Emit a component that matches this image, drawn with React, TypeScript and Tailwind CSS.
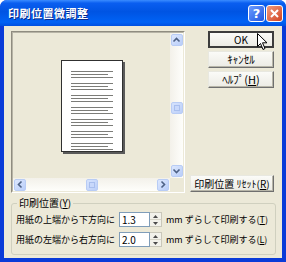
import React from "react";

const font = { fontFamily: '"Noto Sans CJK JP", "Noto Sans", sans-serif' };

function Arrow({ dir }: { dir: "up" | "down" | "left" | "right" }) {
  const d =
    dir === "up"
      ? "M1.5 5.5 L4.5 2.5 L7.5 5.5"
      : dir === "down"
      ? "M1.5 2.5 L4.5 5.5 L7.5 2.5"
      : dir === "left"
      ? "M5.5 1.5 L2.5 4.5 L5.5 7.5"
      : "M2.5 1.5 L5.5 4.5 L2.5 7.5";
  return (
    <svg width="9" height="9" viewBox="0 0 9 9">
      <path d={d} fill="none" stroke="#4d6185" strokeWidth="1.6" />
    </svg>
  );
}

function SBtn({ dir }: { dir: "up" | "down" | "left" | "right" }) {
  return (
    <div className="w-[12px] h-[12px] shrink-0 rounded-[2px] border border-[#b8ccf5] bg-gradient-to-br from-[#dde8fe] to-[#b9cdf8] flex items-center justify-center">
      <Arrow dir={dir} />
    </div>
  );
}

function Thumb() {
  return (
    <div className="w-[12px] h-[12px] shrink-0 rounded-[2px] border border-[#b8ccf5] bg-gradient-to-br from-[#d6e3fd] to-[#bccff8] flex items-center justify-center">
      <div className="w-[6px] h-[6px] border border-[#a9bfee] bg-[#c8d8fb]" />
    </div>
  );
}

function Page() {
  const groups = [0, 1, 2, 3, 4, 5, 6];
  return (
    <div className="relative w-[62px] h-[92px]">
      <div className="absolute left-[2px] top-[2px] w-[62px] h-[92px] bg-[#5a5a5a]" />
      <div className="relative w-[62px] h-[92px] bg-white border border-[#303030] pt-[10px] pl-[9px] flex flex-col gap-[5px]">
        {groups.map((g) => (
          <div key={g} className="flex flex-col gap-[2px]">
            <div className="h-px w-[42px] bg-[#7c7c78]" />
            <div className="h-px w-[37px] bg-[#7c7c78]" />
            <div className="h-px w-[42px] bg-[#7c7c78]" />
          </div>
        ))}
      </div>
    </div>
  );
}

function Btn({
  children,
  w,
  def,
  size = "text-[10px]",
}: {
  children: React.ReactNode;
  w: string;
  def?: boolean;
  size?: string;
}) {
  return (
    <div
      className={`${w} ${size} h-[17px] flex items-center justify-center whitespace-nowrap leading-none text-black bg-gradient-to-b from-[#fbfbf8] to-[#ecebe4] ${
        def
          ? "border-2 border-[#3c3c3c]"
          : "border border-t-[#e8e8e0] border-l-[#e8e8e0] border-b-[#6f6f6f] border-r-[#6f6f6f] shadow-[inset_-1px_-1px_0_#b7b5a8]"
      }`}
    >
      {children}
    </div>
  );
}

function Spin({ value }: { value: string }) {
  return (
    <div className="flex h-[15px] shrink-0">
      <div className="w-[31px] h-[15px] bg-white border border-[#7f9db9] flex items-center pl-[2px] text-[10px] leading-none text-black">
        {value}
      </div>
      <div className="w-[12px] h-[15px] flex flex-col bg-[#f2f1ea] border border-l-0 border-[#c9c7ba]">
        <div className="flex-1 flex items-center justify-center border-b border-[#d6d4c8]">
          <svg width="5" height="3" viewBox="0 0 5 3">
            <path d="M0 3 L2.5 0 L5 3 Z" fill="#4a4a4a" />
          </svg>
        </div>
        <div className="flex-1 flex items-center justify-center">
          <svg width="5" height="3" viewBox="0 0 5 3">
            <path d="M0 0 L2.5 3 L5 0 Z" fill="#4a4a4a" />
          </svg>
        </div>
      </div>
    </div>
  );
}

export default function App() {
  return (
    <div
      style={font}
      className="w-[286px] h-[262px] flex flex-col bg-[#0a3bd8] rounded-t-[7px] overflow-hidden relative"
    >
      {/* title bar */}
      <div className="h-[26px] shrink-0 flex items-center pl-[8px] pr-[3px] bg-[linear-gradient(to_bottom,#3a8cff_0%,#0a5ef0_12%,#0054e3_45%,#0062f5_85%,#0050e0_100%)]">
        <div className="flex-1 text-white font-bold text-[11px] leading-none tracking-[0.5px] [text-shadow:1px_1px_0_#0a2a8a]">
          印刷位置微調整
        </div>
        <div className="flex gap-[1px]">
          <div className="w-[17px] h-[17px] rounded-[3px] border border-white bg-gradient-to-br from-[#6d9bff] to-[#1f54e0] flex items-center justify-center text-white font-bold text-[13px] leading-none" style={{ fontFamily: '"DejaVu Sans", sans-serif' }}>
            ?
          </div>
          <div className="w-[17px] h-[17px] rounded-[3px] border border-white bg-gradient-to-br from-[#f09a7c] to-[#d0401c] flex items-center justify-center">
            <svg width="9" height="9" viewBox="0 0 9 9">
              <path d="M1 1 L8 8 M8 1 L1 8" stroke="white" strokeWidth="2" />
            </svg>
          </div>
        </div>
      </div>

      {/* client */}
      <div className="flex-1 mx-[4px] mb-[4px] bg-[#ece9d8] flex flex-col pl-[7px] pr-[6px] pt-[5px]">
        <div className="flex gap-[5px]">
          {/* preview */}
          <div className="w-[174px] h-[162px] border border-t-[#8f8c80] border-l-[#8f8c80] border-b-[#ffffff] border-r-[#ffffff] flex flex-col">
            <div className="flex-1 border border-t-[#b7b4a6] border-l-[#b7b4a6] border-b-[#ece9d8] border-r-[#ece9d8] flex flex-col">
              <div className="flex-1 flex">
                <div className="flex-1 flex items-start justify-center pt-[27px]">
                  <Page />
                </div>
                <div className="w-[13px] flex flex-col items-center bg-gradient-to-r from-[#f3f1ea] to-[#fefefb] pt-[1px] pb-[1px]">
                  <SBtn dir="up" />
                  <div className="flex-1 flex flex-col items-center justify-center pt-[4px]">
                    <Thumb />
                  </div>
                  <SBtn dir="down" />
                </div>
              </div>
              <div className="h-[13px] flex">
                <div className="flex-1 flex items-center bg-gradient-to-b from-[#f3f1ea] to-[#fefefb] pl-[1px] pr-[1px]">
                  <SBtn dir="left" />
                  <div className="flex-1 flex items-center justify-center">
                    <Thumb />
                  </div>
                  <SBtn dir="right" />
                </div>
                <div className="w-[13px] bg-[#ece9d8]" />
              </div>
            </div>
          </div>

          {/* buttons */}
          <div className="w-[84px] flex flex-col items-end">
            <div className="flex flex-col gap-[3px] items-end">
              <Btn w="w-[66px]" def>
                OK
              </Btn>
              <Btn w="w-[66px]" size="text-[11px]">ｷｬﾝｾﾙ</Btn>
              <Btn w="w-[66px]" size="text-[11px]">
                <span>
                  ﾍﾙﾌﾟ(<span className="underline">H</span>)
                </span>
              </Btn>
            </div>
            <div className="flex-1" />
            <div className="mb-[1px] w-full">
              <Btn w="w-[84px]">
                <span>
                  印刷位置 ﾘｾｯﾄ(<span className="underline">R</span>)
                </span>
              </Btn>
            </div>
          </div>
        </div>

        {/* group */}
        <div className="mt-[10px] w-[265px] h-[52px] border border-[#d0d0bf] rounded-[3px] relative flex flex-col pt-[8px] pl-[4px] gap-[5px]">
          <div className="absolute -top-[7px] left-[5px] px-[2px] bg-[#ece9d8] text-[10px] leading-[12px] text-black whitespace-nowrap">
            印刷位置(<span className="underline">Y</span>)
          </div>
          <div className="flex items-center text-[9px] leading-none text-black whitespace-nowrap">
            <span className="w-[103px] shrink-0">用紙の上端から下方向に</span>
            <Spin value="1.3" />
            <span className="ml-[4px]">mm ずらして印刷する(<span className="underline">T</span>)</span>
          </div>
          <div className="flex items-center text-[9px] leading-none text-black whitespace-nowrap">
            <span className="w-[103px] shrink-0">用紙の左端から右方向に</span>
            <Spin value="2.0" />
            <span className="ml-[4px]">mm ずらして印刷する(<span className="underline">L</span>)</span>
          </div>
        </div>
      </div>

      {/* mouse cursor */}
      <svg className="absolute left-[257px] top-[33px]" width="12" height="18" viewBox="0 0 12 18">
        <path d="M0.5 0.5 L0.5 13.5 L3.5 10.5 L6 16.5 L8 15.5 L5.5 9.8 L10 9.8 Z" fill="white" stroke="black" strokeWidth="1" strokeLinejoin="round" />
      </svg>
    </div>
  );
}
